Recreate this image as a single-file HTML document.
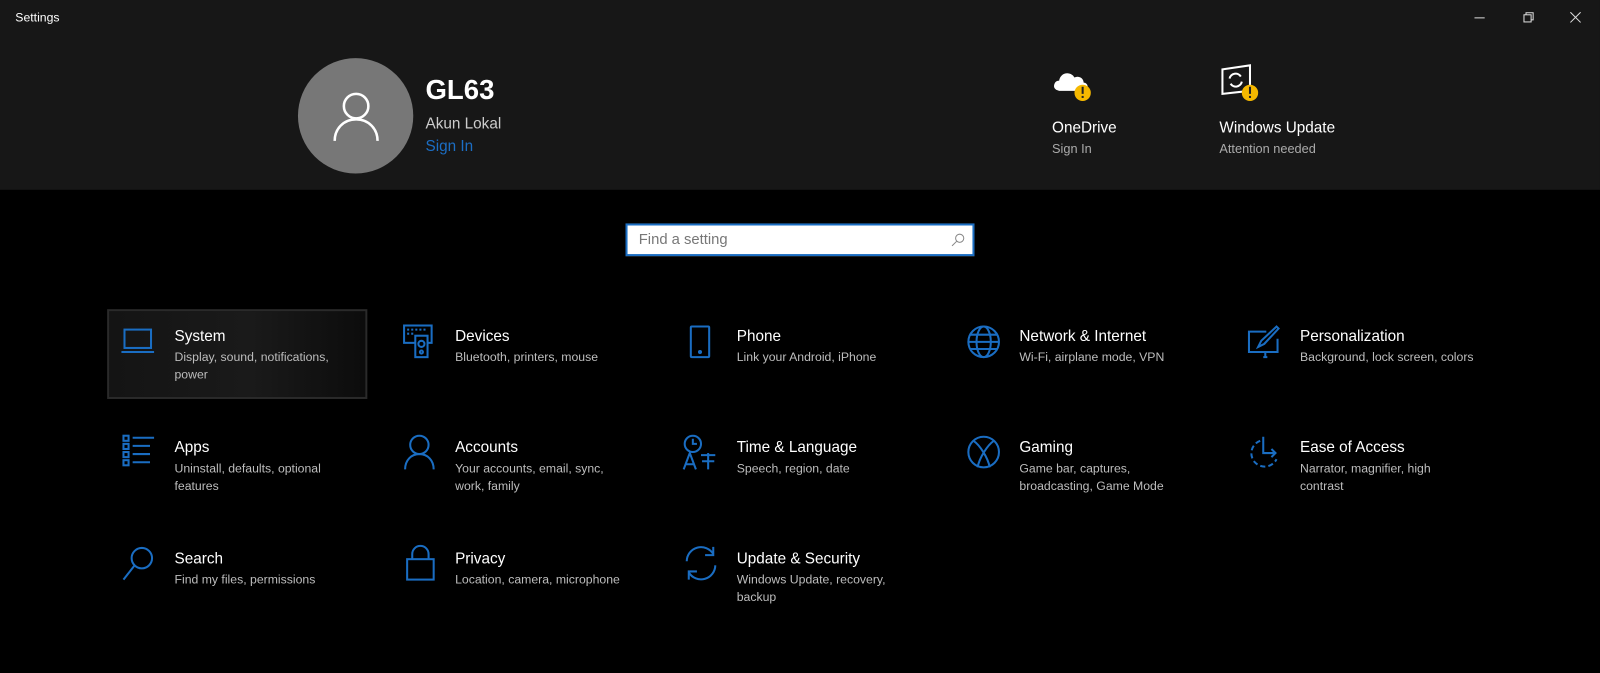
<!DOCTYPE html>
<html><head><meta charset="utf-8"><style>
*{margin:0;padding:0;box-sizing:border-box}
html,body{width:1600px;height:673px;background:#000;overflow:hidden}
body{font-family:"Liberation Sans",sans-serif;color:#fff;position:relative}
#w{position:absolute;left:0;top:0;width:1568px;height:660px;transform:scale(1.0204);transform-origin:0 0}
.hdr{position:absolute;left:0;top:0;width:1568px;height:186px;background:#171717}
.abs{position:absolute}
.t{position:absolute;font-size:15px;color:#fff;white-space:nowrap}
.s{position:absolute;font-size:12px;color:#bdbdbd;line-height:16.5px;width:170px}
svg.i{position:absolute;fill:none;stroke:#1a6dc2;stroke-width:2}
</style></head><body><div id="w">
<div class="hdr"></div>
<div class="abs" style="left:15px;top:10px;font-size:12px;color:#fff">Settings</div>
<svg class="abs" style="left:1440px;top:8px" width="120" height="20" fill="none" stroke="#ddd" stroke-width="1">
<line x1="5" y1="9.5" x2="15" y2="9.5"/>
<rect x="53.5" y="6.5" width="7" height="7"/><path d="M55.5 6.5V4.5h7v7h-2"/>
<path d="M99 4l10 10M109 4L99 14"/></svg>
<div class="abs" style="left:292px;top:57px;width:113px;height:113px;border-radius:50%;background:#777"></div>
<svg class="abs" style="left:325px;top:88px" width="48" height="52" fill="none" stroke="#fff" stroke-width="2.5"><circle cx="24" cy="16" r="12"/><path d="M3 50c0-12 9-21 21-21s21 9 21 21"/></svg>
<div class="abs" style="left:417px;top:73px;font-size:27px;font-weight:bold">GL63</div>
<div class="abs" style="left:417px;top:113px;font-size:15px;color:#ccc">Akun Lokal</div>
<div class="abs" style="left:417px;top:135px;font-size:15px;color:#1c6ec4">Sign In</div>
<svg class="abs" style="left:1030px;top:64px" width="45" height="40"><path d="M5 24a5 5 0 0 1 3-9 8 8 0 0 1 15-3 6 6 0 0 1 9 5 4 4 0 0 1 0 8H8z" fill="#fff"/><circle cx="31" cy="27" r="8" fill="#f5b800"/><rect x="30" y="21" width="2" height="7" fill="#222"/><rect x="30" y="30" width="2" height="2" fill="#222"/></svg>
<div class="abs" style="left:1031px;top:117px;font-size:15px">OneDrive</div>
<div class="abs" style="left:1031px;top:139px;font-size:12.5px;color:#aaa">Sign In</div>
<svg class="abs" style="left:1195px;top:62px" width="45" height="42" fill="none" stroke="#fff" stroke-width="2"><path d="M3 6l27-4v25L3 30z"/><path d="M10 15a6 6 0 0 1 11-2M22 18a6 6 0 0 1-11 2"/><circle cx="30" cy="29" r="8" fill="#f5b800" stroke="none"/><rect x="29" y="23" width="2" height="7" fill="#222" stroke="none"/><rect x="29" y="32" width="2" height="2" fill="#222" stroke="none"/></svg>
<div class="abs" style="left:1195px;top:117px;font-size:15px">Windows Update</div>
<div class="abs" style="left:1195px;top:139px;font-size:12.5px;color:#aaa">Attention needed</div>
<div class="abs" style="left:613px;top:219px;width:342px;height:32px;background:#fff;border:2px solid #1a6dc2"></div>
<div class="abs" style="left:626px;top:227px;font-size:14.5px;color:#777">Find a setting</div>
<svg class="abs" style="left:932px;top:228px" width="14" height="14" fill="none" stroke="#888" stroke-width="1"><circle cx="8.5" cy="5.5" r="4"/><path d="M5.5 8.5L1 13"/></svg>
<div class="abs" style="left:105px;top:303px;width:255px;height:88px;border:2px solid #2a2a2a;background:linear-gradient(90deg,#141414,#1a1a1a 55%,#0c0c0c)"></div>

<svg class="i" style="left:118px;top:318px" width="36" height="32"><rect x="4" y="5" width="26" height="18"/><path d="M1 27h32"/></svg>
<div class="t" style="left:171px;top:321px">System</div><div class="s" style="left:171px;top:342px">Display, sound, notifications, power</div>

<svg class="i" style="left:393px;top:316px" width="36" height="40" stroke-width="1.6"><rect x="3" y="3" width="27" height="17"/><rect x="14" y="13" width="12" height="21" fill="#000"/><circle cx="20" cy="21" r="3"/><circle cx="20" cy="29" r="1.5"/><path d="M6 7h2M10 7h2M14 7h2M18 7h2M22 7h2M6 11h2M10 11h2"/></svg>
<div class="t" style="left:446px;top:321px">Devices</div><div class="s" style="left:446px;top:342px">Bluetooth, printers, mouse</div>

<svg class="i" style="left:672px;top:316px" width="30" height="38"><rect x="5" y="4" width="18" height="30" rx="1"/><circle cx="14" cy="29" r="1" fill="#1a6dc2"/></svg>
<div class="t" style="left:722px;top:321px">Phone</div><div class="s" style="left:722px;top:342px">Link your Android, iPhone</div>

<svg class="i" style="left:946px;top:317px" width="36" height="36"><circle cx="18" cy="18" r="15"/><ellipse cx="18" cy="18" rx="7" ry="15"/><path d="M3 18h30M5 11h26M5 25h26"/></svg>
<div class="t" style="left:999px;top:321px">Network &amp; Internet</div><div class="s" style="left:999px;top:342px">Wi-Fi, airplane mode, VPN</div>

<svg class="i" style="left:1221px;top:318px" width="36" height="36"><path d="M20 7H3v20h28V14"/><path d="M17 32h4M19 27v5M12 22l3-6 15-14 2 2-14 15z"/></svg>
<div class="t" style="left:1274px;top:321px">Personalization</div><div class="s" style="left:1274px;top:342px;width:200px">Background, lock screen, colors</div>

<svg class="i" style="left:118px;top:424px" width="36" height="36" stroke-width="1.8"><rect x="3" y="3" width="5" height="5"/><rect x="3" y="11" width="5" height="5"/><rect x="3" y="19" width="5" height="5"/><rect x="3" y="27" width="5" height="5"/><path d="M12 5h21M12 13h17M12 21h17M12 29h17"/></svg>
<div class="t" style="left:171px;top:430px">Apps</div><div class="s" style="left:171px;top:451px">Uninstall, defaults, optional features</div>

<svg class="i" style="left:393px;top:424px" width="36" height="38"><circle cx="18" cy="12" r="9"/><path d="M4 36c0-9 6-15 14-15s14 6 14 15"/></svg>
<div class="t" style="left:446px;top:430px">Accounts</div><div class="s" style="left:446px;top:451px">Your accounts, email, sync, work, family</div>

<svg class="i" style="left:667px;top:424px" width="38" height="40" stroke-width="1.8"><circle cx="12" cy="11" r="8"/><path d="M12 6v5h4M3 36l6-16 6 16M5 31h8M20 22h14M27 20v16M21 28h12"/></svg>
<div class="t" style="left:722px;top:430px">Time &amp; Language</div><div class="s" style="left:722px;top:451px">Speech, region, date</div>

<svg class="i" style="left:946px;top:426px" width="36" height="36"><circle cx="18" cy="17" r="15"/><path d="M8 6c6 4 14 16 16 26M28 6c-6 4-14 16-16 26"/></svg>
<div class="t" style="left:999px;top:430px">Gaming</div><div class="s" style="left:999px;top:451px">Game bar, captures, broadcasting, Game Mode</div>

<svg class="i" style="left:1221px;top:424px" width="36" height="40" stroke-dasharray="5 3"><path d="M14 8A13 13 0 1 0 30 26"/><path d="M17 4v16h12M25 16l4 4-4 4" stroke-dasharray="none"/></svg>
<div class="t" style="left:1274px;top:430px">Ease of Access</div><div class="s" style="left:1274px;top:451px">Narrator, magnifier, high contrast</div>

<svg class="i" style="left:118px;top:533px" width="36" height="38"><circle cx="21" cy="14" r="10"/><path d="M14 21L3 35"/></svg>
<div class="t" style="left:171px;top:539px">Search</div><div class="s" style="left:171px;top:560px">Find my files, permissions</div>

<svg class="i" style="left:395px;top:533px" width="34" height="40"><path d="M9 15V10a8 8 0 0 1 16 0v5"/><rect x="4" y="15" width="26" height="20"/></svg>
<div class="t" style="left:446px;top:539px">Privacy</div><div class="s" style="left:446px;top:560px">Location, camera, microphone</div>

<svg class="i" style="left:668px;top:533px" width="38" height="38" stroke-width="2.2"><path d="M5 17A14 14 0 0 1 31 10M33 21A14 14 0 0 1 7 28"/><path d="M31 3v8h-8M7 35v-8h8"/></svg>
<div class="t" style="left:722px;top:539px">Update &amp; Security</div><div class="s" style="left:722px;top:560px">Windows Update, recovery, backup</div>
</div></body></html>
